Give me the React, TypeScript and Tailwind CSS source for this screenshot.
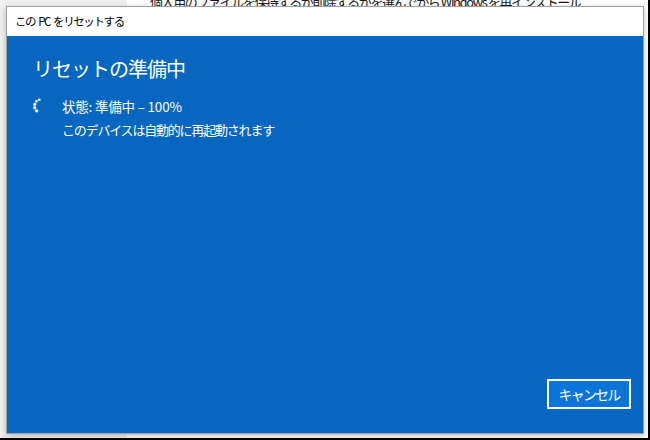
const FONT = "font-['Noto_Sans_CJK_JP','Noto_Sans',sans-serif]";

function Spinner() {
  // dots running along the left half of a ring, like the Windows busy indicator
  const dots = [
    { a: 105, r: 1.3 },
    { a: 135, r: 1.4 },
    { a: 165, r: 1.5 },
    { a: 195, r: 1.6 },
    { a: 228, r: 1.7 },
  ];
  return (
    <svg width="14" height="16" viewBox="0 0 14 16" className="shrink-0">
      {dots.map((d, i) => {
        const rad = (d.a * Math.PI) / 180;
        const cx = 9 + 6.5 * Math.cos(rad);
        const cy = 8 - 6.5 * Math.sin(rad);
        return <circle key={i} cx={cx} cy={cy} r={d.r} fill="#ffffff" />;
      })}
    </svg>
  );
}

export default function App() {
  return (
    <div className={`relative w-[650px] h-[440px] overflow-hidden bg-white border-r-2 border-b-2 border-black ${FONT}`}>
      {/* window behind the dialog */}
      <div className="absolute left-0 top-0 w-[127px] h-full bg-[#f0f0f0]" />
      <div className="absolute left-[150px] top-[-8px] text-[13px] tracking-[-1.4px] text-[#1a1a1a] whitespace-nowrap">
        個人用のファイルを保持するか削除するかを選んでから Windows を再インストール
      </div>

      {/* dialog */}
      <div className="absolute left-[6px] top-[6px] w-[638px] h-[428px] flex flex-col border border-[#a0a0a0] shadow-[0_2px_6px_rgba(0,0,0,0.25)]">
        <div className="h-[29px] shrink-0 bg-white flex items-center gap-[3px] pl-[8px] text-[11.5px] tracking-[-1.4px] text-black whitespace-nowrap">
          <span>この</span>
          <span>PC</span>
          <span>をリセットする</span>
        </div>
        <div className="flex-1 bg-[#0767c0] text-white flex flex-col px-[26px]">
          <div className="mt-[17px] text-[20px] leading-[32px] tracking-[-1px]">リセットの準備中</div>
          <div className="mt-[10px] flex items-start gap-[16px]">
            <div className="mt-[3px] ml-[-1px]">
              <Spinner />
            </div>
            <div className="text-[13.5px] leading-[23px]">
              <div className="tracking-[-0.2px]">状態: 準備中 – 100%</div>
              <div className="text-[13px] tracking-[-1.2px]">このデバイスは自動的に再起動されます</div>
            </div>
          </div>
          <div className="flex-1" />
          <div className="flex justify-end mb-[24px] mr-[-14px]">
            <button className="w-[84px] h-[30px] border-2 border-white bg-[#0a74d8] text-white text-[14px] tracking-[-1.8px] flex items-center justify-center">
              キャンセル
            </button>
          </div>
        </div>
      </div>
    </div>
  );
}
